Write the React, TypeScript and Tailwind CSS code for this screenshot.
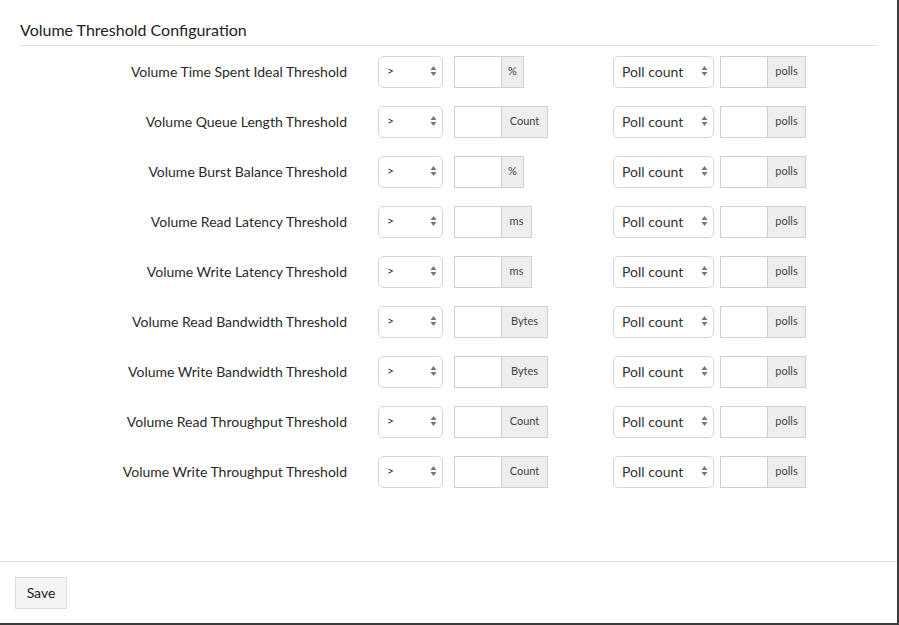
import React from "react";

type Row = { label: string; unit: string; unitWidth: number };

const rows: Row[] = [
  { label: "Volume Time Spent Ideal Threshold", unit: "%", unitWidth: 22 },
  { label: "Volume Queue Length Threshold", unit: "Count", unitWidth: 46 },
  { label: "Volume Burst Balance Threshold", unit: "%", unitWidth: 22 },
  { label: "Volume Read Latency Threshold", unit: "ms", unitWidth: 30 },
  { label: "Volume Write Latency Threshold", unit: "ms", unitWidth: 30 },
  { label: "Volume Read Bandwidth Threshold", unit: "Bytes", unitWidth: 46 },
  { label: "Volume Write Bandwidth Threshold", unit: "Bytes", unitWidth: 46 },
  { label: "Volume Read Throughput Threshold", unit: "Count", unitWidth: 46 },
  { label: "Volume Write Throughput Threshold", unit: "Count", unitWidth: 46 },
];

function Arrows() {
  return (
    <svg width="7" height="12" viewBox="0 0 7 12" className="shrink-0">
      <path d="M3.5 1 L6.5 5 L0.5 5 Z" fill="#777" />
      <path d="M3.5 11 L6.5 7 L0.5 7 Z" fill="#777" />
    </svg>
  );
}

function FakeSelect({ value, width, small }: { value: string; width: number; small?: boolean }) {
  return (
    <div
      className="flex h-[32px] shrink-0 items-center justify-between rounded-[5px] border border-[#d6d6d6] bg-white pb-[2px] pl-[8px] pr-[5px]"
      style={{ width }}
    >
      <span className={small ? "text-[12px] text-[#333]" : "text-[14px] text-[#333]"}>{value}</span>
      <Arrows />
    </div>
  );
}

function InputGroup({ unit, unitWidth, inputWidth }: { unit: string; unitWidth: number; inputWidth: number }) {
  return (
    <div className="flex h-[32px]">
      <div className="h-full border border-[#d0d0d0] bg-white" style={{ width: inputWidth }} />
      <div
        className="flex h-full items-center justify-center border border-l-0 border-[#d0d0d0] bg-[#eeeeee] pb-[2px] text-[11px] text-[#444]"
        style={{ width: unitWidth }}
      >
        {unit}
      </div>
    </div>
  );
}

export default function App() {
  return (
    <div
      className="flex h-[625px] w-[899px] flex-col border-b-2 border-r-2 border-[#3c3c3c] bg-white text-[#222]"
      style={{ fontFamily: "Lato, 'Open Sans', sans-serif" }}
    >
      <div className="flex-1">
        <div className="mx-[20px] mt-[20px] mr-[19px] border-b border-[#e2e2e2] pb-[5px]">
          <h2 className="text-[16px] leading-[20px] text-[#222]">Volume Threshold Configuration</h2>
        </div>
        <div className="mt-[10px] flex flex-col gap-[18px]">
          {rows.map((r) => (
            <div key={r.label} className="flex h-[32px] items-center">
              <div className="w-[347px] shrink-0 pb-[1px] text-right text-[14px] text-[#2a2a2a]">{r.label}</div>
              <div className="ml-[31px]">
                <FakeSelect value=">" width={65} small />
              </div>
              <div className="ml-[11px] w-[159px] shrink-0">
                <InputGroup unit={r.unit} unitWidth={r.unitWidth} inputWidth={48} />
              </div>
              <FakeSelect value="Poll count" width={101} />
              <div className="ml-[6px]">
                <InputGroup unit="polls" unitWidth={38} inputWidth={48} />
              </div>
            </div>
          ))}
        </div>
      </div>
      <div className="h-[62px] border-t border-[#e2e2e2] pl-[15px] pt-[15px]">
        <button className="h-[32px] w-[52px] border border-[#dcdcdc] bg-[#f4f4f4] pb-[2px] text-[14px] text-[#222]">
          Save
        </button>
      </div>
    </div>
  );
}
